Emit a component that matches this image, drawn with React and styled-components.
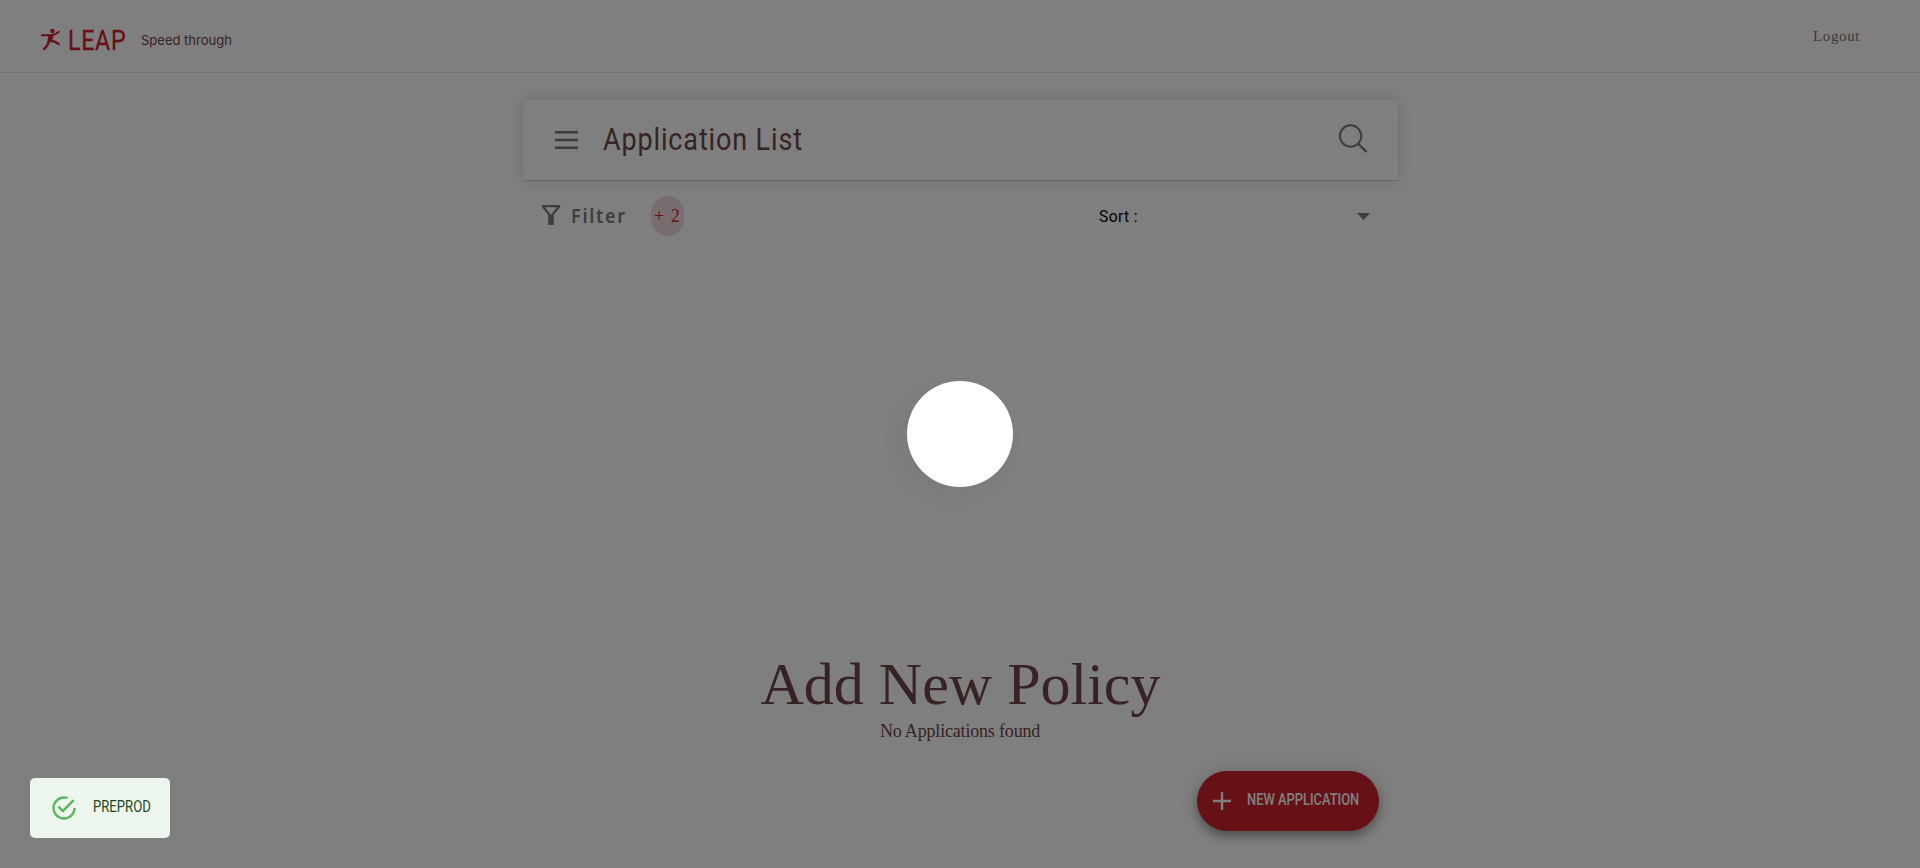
import React from "react";
import styled, { createGlobalStyle } from "styled-components";

const sans = 'Roboto, "Liberation Sans", sans-serif';
const serif = '"Liberation Serif", "Times New Roman", serif';

const GlobalStyle = createGlobalStyle`
  *, *::before, *::after { box-sizing: border-box; }
  html, body { margin: 0; padding: 0; background: #fff; overflow: hidden; }
`;

const Page = styled.div`
  height: 100vh;
  display: flex;
  flex-direction: column;
  align-items: center;
  font-family: ${serif};
  color: #6e4646;
  background: #fff;
  svg { display: block; flex: none; }
`;

const Header = styled.header`
  width: 100%;
  height: 73px;
  flex: none;
  display: flex;
  justify-content: space-between;
  align-items: flex-start;
  border-bottom: 1px solid #e0e0e0;
  padding: 0 60px 0 40px;
`;

const Brand = styled.div`
  display: flex;
  align-items: center;
  height: 80px;
`;

const Condensed = styled.span`
  display: inline-block;
  white-space: nowrap;
  letter-spacing: ${(p) => p.$tracking || 0}px;
  transform-origin: left center;
  transform: scaleX(${(p) => p.$ratio});
`;

const BrandName = styled.div`
  width: 72px;
  margin: 2px 0 0 7px;
  font: 400 28px/32px ${sans};
  color: #d2222c;
  -webkit-text-stroke: 0.3px #d2222c;
`;

const Tagline = styled.div`
  margin-left: 1px;
  font: 400 13px/18px Inter, ${sans};
`;

const Logout = styled.a`
  margin-top: 27px;
  font-size: 15px;
  line-height: 18px;
  letter-spacing: 0.6px;
  color: #757575;
`;

const Main = styled.main`
  width: 875px;
  flex: 1;
  display: flex;
  flex-direction: column;
  margin-left: 1px;
  padding-top: 27px;
`;

const TitleBar = styled.div`
  height: 81px;
  flex: none;
  display: flex;
  align-items: center;
  padding: 0 30px 0 32px;
  border-bottom: 1px solid #cfcfcf;
  box-shadow: 0 0 14px rgba(0, 0, 0, 0.15);
`;

const Title = styled.h1`
  flex: 1;
  margin: 0 0 0 25px;
  font: 400 31px/40px ${sans};
`;

const SearchSlot = styled.div`
  margin-bottom: 5px;
`;

const Tools = styled.div`
  display: flex;
  align-items: center;
  height: 70px;
  padding: 0 28px 0 18px;
`;

const FilterLabel = styled.div`
  width: 80px;
  margin-left: 10px;
  font: 600 19.5px/26px "Noto Sans", ${sans};
  color: #7c7c7c;
`;

const FilterIconSlot = styled.div`
  margin-bottom: 3px;
`;

const Count = styled.div`
  width: 33px;
  height: 40px;
  border-radius: 17px;
  background: #f3dcde;
  color: #d2222c;
  font-size: 18px;
  line-height: 40px;
  letter-spacing: 1.1px;
  text-align: center;
  white-space: nowrap;
`;

const Sort = styled.div`
  flex: 1;
  display: flex;
  justify-content: space-between;
  align-items: center;
  margin-left: 415px;
  font: 400 17px/24px ${sans};
  color: #000;
`;

const Empty = styled.section`
  display: flex;
  flex-direction: column;
  align-items: center;
  margin-top: 395px;
`;

const EmptyTitle = styled.h2`
  margin: 0;
  font-weight: 400;
  font-size: 60px;
  line-height: 76px;
`;

const EmptyText = styled.p`
  margin: -1px 1px 1px 0;
  font-size: 18px;
  line-height: 20px;
  letter-spacing: -0.18px;
`;

const NewButton = styled.button`
  align-self: flex-end;
  display: flex;
  align-items: center;
  width: 182px;
  height: 60px;
  margin: 29px 19px 0 0;
  padding: 0 0 0 16px;
  border: 0;
  border-radius: 30px;
  background: #cb222b;
  color: #fff;
  font: 500 16px/20px ${sans};
  text-align: left;
  box-shadow: 0 6px 10px rgba(0, 0, 0, 0.28), 0 1px 20px rgba(0, 0, 0, 0.16);
  svg { margin-right: 16px; }
`;

const ButtonText = styled.span`
  margin-top: -2px;
`;

const Backdrop = styled.div`
  position: fixed;
  inset: 0;
  display: flex;
  align-items: center;
  justify-content: center;
  background: rgba(0, 0, 0, 0.5);
`;

const Loader = styled.div`
  width: 106px;
  height: 106px;
  border-radius: 50%;
  background: #fff;
  box-shadow: -8px 8px 30px rgba(0, 0, 0, 0.05);
`;

const Toast = styled.div`
  position: fixed;
  left: 30px;
  bottom: 30px;
  display: flex;
  align-items: center;
  width: 140px;
  height: 60px;
  padding-left: 20px;
  border-radius: 5px;
  background: #edf7ed;
  color: #1e4620;
  font: 400 16px/20px ${sans};
  svg { display: block; flex: none; margin-right: 15px; }
`;

const ToastText = styled.div`
  margin-top: -2px;
`;

const Runner = () => (
  <svg width="21" height="24" viewBox="0 0 21 24" fill="none" stroke="#d2222c" strokeLinecap="round" strokeLinejoin="round">
    <circle cx="12.4" cy="3" r="2.3" fill="#d2222c" stroke="none" />
    <path d="M2 7.3 H12 Q15.5 6.4 18.7 4" strokeWidth="2.1" />
    <path d="M9 7.4 L13 7.4 L11.4 13.6 L8 14.2 Z" fill="#d2222c" strokeWidth="1.2" />
    <path d="M11 12.6 Q14.5 13 18.6 16" strokeWidth="2.3" />
    <path d="M8.7 13.6 Q7.8 18.4 4 21" strokeWidth="2.3" />
  </svg>
);

const MenuIcon = () => (
  <svg width="23" height="18" viewBox="0 0 23 18" fill="#7a7a7a">
    <path d="M0 0h23v2.4H0zM0 7.8h23v2.4H0zM0 15.6h23V18H0z" />
  </svg>
);

const SearchIcon = () => (
  <svg width="30" height="30" viewBox="0 0 30 30" fill="none" stroke="#7a7a7a" strokeWidth="2">
    <circle cx="12.6" cy="13" r="10.7" />
    <path d="M20.2 20.7 L28 28.4" strokeWidth="2.3" strokeLinecap="round" />
  </svg>
);

const FilterIcon = () => (
  <svg width="20" height="20" viewBox="0 0 20 20" fill="none" stroke="#7a7a7a" strokeWidth="2.2">
    <path d="M1.7 1.2 H18.3 L11.5 9.7 V18.8 H8.5 V9.7 Z" strokeLinejoin="round" />
    <path d="M10 10 V19.6" strokeWidth="5" />
  </svg>
);

const CheckIcon = () => (
  <svg width="28" height="28" viewBox="0 0 24 24" fill="#5cb660">
    <path d="M20 12a8 8 0 1 1-8-8c.76 0 1.5.11 2.2.31l1.57-1.57A9.822 9.822 0 0 0 12 2a10 10 0 1 0 10 10h-2M7.91 10.08 6.5 11.5 11 16 21 6l-1.41-1.42L11 13.17l-3.09-3.09z" />
  </svg>
);

export default function App() {
  return (
    <>
      <GlobalStyle />
      <Page>
        <Header>
          <Brand>
            <Runner />
            <BrandName><Condensed $ratio={0.83} $tracking={0.8}>LEAP</Condensed></BrandName>
            <Tagline>Speed through</Tagline>
          </Brand>
          <Logout>Logout</Logout>
        </Header>
        <Main>
          <TitleBar>
            <MenuIcon />
            <Title><Condensed $ratio={0.87} $tracking={1}>Application List</Condensed></Title>
            <SearchSlot><SearchIcon /></SearchSlot>
          </TitleBar>
          <Tools>
            <FilterIconSlot><FilterIcon /></FilterIconSlot>
            <FilterLabel><Condensed $ratio={0.93} $tracking={1.8}>Filter</Condensed></FilterLabel>
            <Count>+ 2</Count>
            <Sort>
              <Condensed $ratio={0.92} $tracking={0.4}>Sort :</Condensed>
              <svg width="13" height="7" viewBox="0 0 13 7"><path d="M0 0h13L6.5 7z" fill="#7a7a7a" /></svg>
            </Sort>
          </Tools>
          <Empty>
            <EmptyTitle>Add New Policy</EmptyTitle>
            <EmptyText>No Applications found</EmptyText>
          </Empty>
          <NewButton>
            <svg width="18" height="18" viewBox="0 0 18 18"><path d="M9 0v18M0 9h18" stroke="#fff" strokeWidth="2.4" /></svg>
            <ButtonText><Condensed $ratio={0.805}>NEW APPLICATION</Condensed></ButtonText>
          </NewButton>
        </Main>
      </Page>
      <Backdrop><Loader /></Backdrop>
      <Toast>
        <CheckIcon />
        <ToastText><Condensed $ratio={0.82}>PREPROD</Condensed></ToastText>
      </Toast>
    </>
  );
}
